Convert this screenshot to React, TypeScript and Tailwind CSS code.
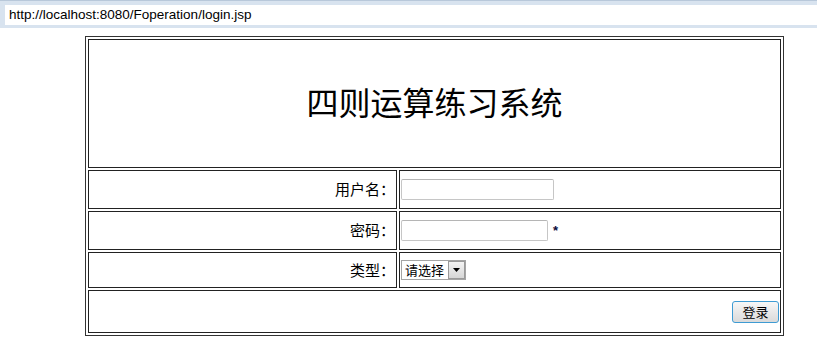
export default function App() {
  return (
    <div className="w-[817px] h-[345px] bg-white overflow-hidden">
      {/* address bar */}
      <div className="h-[28px] bg-[#d8e3ef] border-t border-[#b8c8da] pt-[4px] pl-[5px] pb-[3px]">
        <div
          className="h-[20px] bg-white pl-[4px] flex items-center text-[13.5px] text-black"
          style={{ fontFamily: '"Liberation Sans", sans-serif' }}
        >
          http://localhost:8080/Foperation/login.jsp
        </div>
      </div>

      <div className="mt-[8px] ml-[85px] w-[699px] border border-[#333] p-[2px] text-black bg-white">
        <div className="grid grid-cols-[309px_382px] gap-[2px]">
          {/* title */}
          <div className="col-span-2 h-[129px] border border-[#222] flex items-center justify-center">
            <h1
              className="text-[32px] font-normal leading-none"
              style={{ fontFamily: '"Liberation Serif", "Noto Sans CJK SC", serif' }}
            >
              四则运算练习系统
            </h1>
          </div>

          {/* username */}
          <Label text="用户名：" h="h-[39px]" />
          <div className="h-[39px] border border-[#222] p-px flex items-center">
            <div className="w-[153px] h-[21px] border border-[#c6c6c6] border-t-[#b5b5b5] rounded-[2px] bg-white" />
          </div>

          {/* password */}
          <Label text="密码：" h="h-[39px]" />
          <div className="h-[39px] border border-[#222] p-px flex items-center">
            <div className="w-[147px] h-[21px] border border-[#c6c6c6] border-t-[#b5b5b5] rounded-[2px] bg-white" />
            <span
              className="ml-[5px] text-[13px] font-bold text-[#0a0a3a] leading-none"
              style={{ fontFamily: '"Liberation Sans", sans-serif' }}
            >
              *
            </span>
          </div>

          {/* type */}
          <Label text="类型：" h="h-[36px]" />
          <div className="h-[36px] border border-[#222] p-px flex items-center">
            <div className="w-[65px] h-[20px] border border-[#a5a5a5] bg-white flex items-stretch">
              <span
                className="flex-1 pl-[3px] text-[13px] leading-[18px] whitespace-nowrap"
                style={{ fontFamily: '"Noto Sans CJK SC", sans-serif' }}
              >
                请选择
              </span>
              <span className="w-[17px] shrink-0 border border-[#9a9a9a] bg-gradient-to-b from-[#f4f4f4] to-[#d6d6d6] flex items-center justify-center">
                <svg width="7" height="4" viewBox="0 0 7 4">
                  <path d="M0 0h7L3.5 4z" fill="#000" />
                </svg>
              </span>
            </div>
          </div>

          {/* submit */}
          <div className="col-span-2 h-[43px] border border-[#222] pr-px flex items-center justify-end">
            <button
              className="w-[47px] h-[22px] rounded-[3px] border border-[#3e9bd3] bg-gradient-to-b from-[#f7f7f7] to-[#dadada] text-[13px] leading-none"
              style={{ fontFamily: '"Noto Sans CJK SC", sans-serif' }}
            >
              登录
            </button>
          </div>
        </div>
      </div>
    </div>
  );
}

function Label({ text, h }: { text: string; h: string }) {
  return (
    <div
      className={`${h} border border-[#222] pr-px flex items-center justify-end text-[15px]`}
      style={{ fontFamily: '"Noto Sans CJK SC", sans-serif' }}
    >
      {text}
    </div>
  );
}
